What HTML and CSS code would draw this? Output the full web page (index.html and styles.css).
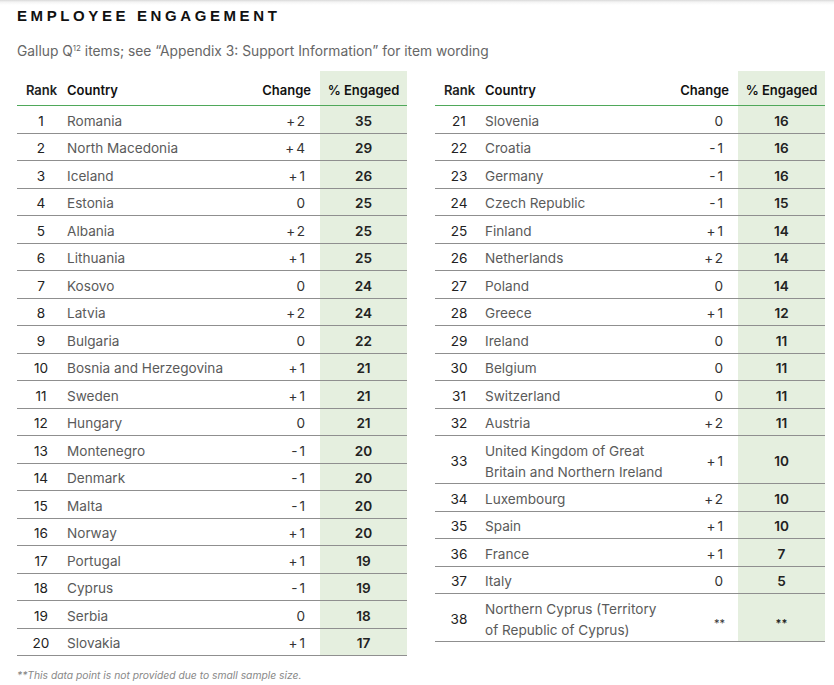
FILE: index.html
```html
<!DOCTYPE html>
<html lang="en">
<head>
<meta charset="utf-8">
<title>Employee Engagement</title>
<link rel="stylesheet" href="styles.css">
</head>
<body>
<div class="page">
  <h1 class="title">EMPLOYEE ENGAGEMENT</h1>
  <p class="subtitle">Gallup Q<sup>12</sup> items; see “Appendix 3: Support Information” for item wording</p>
  <div class="tables">
    <div class="tbl">
      <div class="row head"><span class="rank">Rank</span><span class="country">Country</span><span class="change">Change</span><span class="pct">% Engaged</span></div>
      <div class="row"><span class="rank">1</span><span class="country">Romania</span><span class="change">+2</span><span class="pct">35</span></div>
      <div class="row"><span class="rank">2</span><span class="country">North Macedonia</span><span class="change">+4</span><span class="pct">29</span></div>
      <div class="row"><span class="rank">3</span><span class="country">Iceland</span><span class="change">+1</span><span class="pct">26</span></div>
      <div class="row"><span class="rank">4</span><span class="country">Estonia</span><span class="change">0</span><span class="pct">25</span></div>
      <div class="row"><span class="rank">5</span><span class="country">Albania</span><span class="change">+2</span><span class="pct">25</span></div>
      <div class="row"><span class="rank">6</span><span class="country">Lithuania</span><span class="change">+1</span><span class="pct">25</span></div>
      <div class="row"><span class="rank">7</span><span class="country">Kosovo</span><span class="change">0</span><span class="pct">24</span></div>
      <div class="row"><span class="rank">8</span><span class="country">Latvia</span><span class="change">+2</span><span class="pct">24</span></div>
      <div class="row"><span class="rank">9</span><span class="country">Bulgaria</span><span class="change">0</span><span class="pct">22</span></div>
      <div class="row"><span class="rank">10</span><span class="country">Bosnia and Herzegovina</span><span class="change">+1</span><span class="pct">21</span></div>
      <div class="row"><span class="rank">11</span><span class="country">Sweden</span><span class="change">+1</span><span class="pct">21</span></div>
      <div class="row"><span class="rank">12</span><span class="country">Hungary</span><span class="change">0</span><span class="pct">21</span></div>
      <div class="row"><span class="rank">13</span><span class="country">Montenegro</span><span class="change">-1</span><span class="pct">20</span></div>
      <div class="row"><span class="rank">14</span><span class="country">Denmark</span><span class="change">-1</span><span class="pct">20</span></div>
      <div class="row"><span class="rank">15</span><span class="country">Malta</span><span class="change">-1</span><span class="pct">20</span></div>
      <div class="row"><span class="rank">16</span><span class="country">Norway</span><span class="change">+1</span><span class="pct">20</span></div>
      <div class="row"><span class="rank">17</span><span class="country">Portugal</span><span class="change">+1</span><span class="pct">19</span></div>
      <div class="row"><span class="rank">18</span><span class="country">Cyprus</span><span class="change">-1</span><span class="pct">19</span></div>
      <div class="row"><span class="rank">19</span><span class="country">Serbia</span><span class="change">0</span><span class="pct">18</span></div>
      <div class="row"><span class="rank">20</span><span class="country">Slovakia</span><span class="change">+1</span><span class="pct">17</span></div>
    </div>
    <div class="tbl">
      <div class="row head"><span class="rank">Rank</span><span class="country">Country</span><span class="change">Change</span><span class="pct">% Engaged</span></div>
      <div class="row"><span class="rank">21</span><span class="country">Slovenia</span><span class="change">0</span><span class="pct">16</span></div>
      <div class="row"><span class="rank">22</span><span class="country">Croatia</span><span class="change">-1</span><span class="pct">16</span></div>
      <div class="row"><span class="rank">23</span><span class="country">Germany</span><span class="change">-1</span><span class="pct">16</span></div>
      <div class="row"><span class="rank">24</span><span class="country">Czech Republic</span><span class="change">-1</span><span class="pct">15</span></div>
      <div class="row"><span class="rank">25</span><span class="country">Finland</span><span class="change">+1</span><span class="pct">14</span></div>
      <div class="row"><span class="rank">26</span><span class="country">Netherlands</span><span class="change">+2</span><span class="pct">14</span></div>
      <div class="row"><span class="rank">27</span><span class="country">Poland</span><span class="change">0</span><span class="pct">14</span></div>
      <div class="row"><span class="rank">28</span><span class="country">Greece</span><span class="change">+1</span><span class="pct">12</span></div>
      <div class="row"><span class="rank">29</span><span class="country">Ireland</span><span class="change">0</span><span class="pct">11</span></div>
      <div class="row"><span class="rank">30</span><span class="country">Belgium</span><span class="change">0</span><span class="pct">11</span></div>
      <div class="row"><span class="rank">31</span><span class="country">Switzerland</span><span class="change">0</span><span class="pct">11</span></div>
      <div class="row"><span class="rank">32</span><span class="country">Austria</span><span class="change">+2</span><span class="pct">11</span></div>
      <div class="row double"><span class="rank">33</span><span class="country">United Kingdom of Great<br>Britain and Northern Ireland</span><span class="change">+1</span><span class="pct">10</span></div>
      <div class="row"><span class="rank">34</span><span class="country">Luxembourg</span><span class="change">+2</span><span class="pct">10</span></div>
      <div class="row"><span class="rank">35</span><span class="country">Spain</span><span class="change">+1</span><span class="pct">10</span></div>
      <div class="row"><span class="rank">36</span><span class="country">France</span><span class="change">+1</span><span class="pct">7</span></div>
      <div class="row"><span class="rank">37</span><span class="country">Italy</span><span class="change">0</span><span class="pct">5</span></div>
      <div class="row double"><span class="rank">38</span><span class="country">Northern Cyprus (Territory<br>of Republic of Cyprus)</span><span class="change stars">**</span><span class="pct stars">**</span></div>
    </div>
  </div>
  <p class="footnote">**This data point is not provided due to small sample size.</p>
</div>
</body>
</html>
```

FILE: styles.css
```css
* { box-sizing: border-box; }

html, body {
  margin: 0;
  padding: 0;
  background: #fff;
}

body {
  font-family: Inter, "Liberation Sans", Arial, sans-serif;
  color: #333;
  background-image: linear-gradient(to bottom, #d9d9d9 0px, #f4f4f4 2px, #ffffff 5px);
  background-repeat: no-repeat;
  background-size: 100% 6px;
}

.page {
  padding: 6px 10px 0 17px;
}

.title {
  margin: 0;
  font-family: "Liberation Sans", Arial, sans-serif;
  font-weight: 700;
  font-size: 15px;
  line-height: 20px;
  letter-spacing: 3.6px;
  color: #111;
}

.subtitle {
  margin: 15px 0 0;
  font-size: 13.8px;
  line-height: 20px;
  color: #666;
}

.subtitle sup {
  font-size: 8px;
  line-height: 0;
  vertical-align: 5px;
}

.tables {
  display: flex;
  gap: 28px;
  margin-top: 10px;
  align-items: flex-start;
}

.tbl {
  width: 390px;
  display: flex;
  flex-direction: column;
}

.row {
  display: grid;
  grid-template-columns: 48px 190px 65px 87px;
  height: 27.5px;
  border-bottom: 1.5px solid #8f8f8f;
  font-size: 13.6px;
  line-height: 20px;
}

.row > span {
  display: flex;
  align-items: center;
  padding-top: 3px;
}

.row.double {
  height: 48px;
  line-height: 21px;
}

.row.double > span {
  padding-top: 4px;
}

.row.head {
  height: 35px;
  border-bottom: 1.5px solid #4fa85a;
  font-size: 13px;
  font-weight: 600;
  color: #111;
}

.row.head > span {
  align-items: flex-end;
  padding-top: 0;
  padding-bottom: 5px;
}

.rank {
  justify-content: center;
  color: #222;
}

.country {
  padding-left: 2px;
  color: #5a5a5a;
}

.change {
  justify-content: flex-end;
  padding-right: 13px;
  letter-spacing: 2px;
  color: #333;
}

.row.head .rank { padding-left: 1px; }
.row.head .country { color: #111; }
.row.head .change { padding-right: 9px; letter-spacing: 0; color: #111; }
.row.head .pct { color: #111; font-weight: 600; }

.pct {
  justify-content: center;
  background: #e5efdf;
  font-weight: 600;
  color: #222;
}

.stars {
  font-size: 11px;
  letter-spacing: 0;
  align-items: flex-start;
}

.row.double > .stars {
  padding-top: 12px;
}

.footnote {
  margin: 13px 0 0;
  font-size: 10.3px;
  font-style: italic;
  color: #888;
}
```
